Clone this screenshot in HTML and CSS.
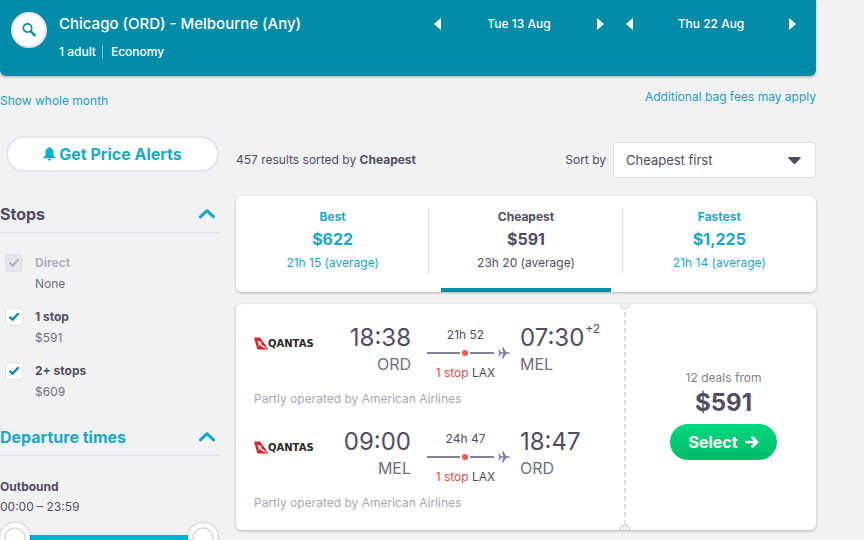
FILE: index.html
```html
<!DOCTYPE html>
<html lang="en">
<head>
<meta charset="utf-8">
<meta name="viewport" content="width=device-width, initial-scale=1">
<title>Chicago to Melbourne flights</title>
<link rel="stylesheet" href="styles.css">
</head>
<body>
<svg class="defs" aria-hidden="true">
  <symbol id="plane" viewBox="0 0 12 12"><path d="M0.300 2.500h1l1.600 2.700h2.500L3.800 0.400h1.400l3.200 4.800h2.300c.7 0 1.100.4 1.100.8s-.4.8-1.100.8H8.400L5.200 11.600H3.800l1.600-4.800H2.900L1.300 9.500h-1L1.200 6z" fill="#827f91"/></symbol>
  <symbol id="tail" viewBox="0 0 15 13"><path d="M0 .5h4.600c1.200 0 2 .4 2.600 1.500L14.500 12.500H3.500z" fill="#dc2030"/><path d="M3.500 4C4.300 4.400 4.800 4.200 5.500 4.400c.8.200 1.300.1 1.800.4.500.3.300.7 1 1-.7 0-1.100.1-1.500.4 1 1.900 4.800 4 7.300 6C10.500 11 6.800 9.500 5.400 7.500c-.3 1-.1 1.600.2 2.500C4.500 9 4.300 7.700 4.500 6.300 3.900 5.800 3.600 5 3.500 4z" fill="#fff"/></symbol>
  <symbol id="chevron" viewBox="0 0 16 10"><path d="M2 8l6-5.500L14 8" fill="none" stroke="#13aac8" stroke-width="2.800" stroke-linecap="round" stroke-linejoin="round"/></symbol>
</svg>

<div class="page">
  <header class="search">
    <button class="search-button" aria-label="Edit search"><svg width="16" height="16" viewBox="0 0 16 16"><g fill="none" stroke="#058ba5" stroke-linecap="round"><circle cx="6.500" cy="6" r="4.200" stroke-width="1.700"/><path d="M9.800 9.300l4 4" stroke-width="2.400"/></g></svg></button>
    <div class="trip">
      <h1>Chicago (ORD) - Melbourne (Any)</h1>
      <p class="details"><span>1 adult</span><span>Economy</span></p>
    </div>
    <div class="dates">
      <div class="date">
        <button aria-label="Previous outbound day"><svg width="7" height="12"><path d="M7 0v12L0 6z"/></svg></button>
        <span>Tue 13 Aug</span>
        <button aria-label="Next outbound day"><svg width="7" height="12"><path d="M0 0v12l7-6z"/></svg></button>
      </div>
      <div class="date">
        <button aria-label="Previous return day"><svg width="7" height="12"><path d="M7 0v12L0 6z"/></svg></button>
        <span>Thu 22 Aug</span>
        <button aria-label="Next return day"><svg width="7" height="12"><path d="M0 0v12l7-6z"/></svg></button>
      </div>
    </div>
  </header>

  <nav class="links"><a class="month" href="#">Show whole month</a><a href="#">Additional bag fees may apply</a></nav>

  <div class="columns">
    <aside>
      <button class="alerts"><svg width="13" height="14" viewBox="0 0 13 14"><path d="M6.500 0c.7 0 1.100.5 1.100 1.100C9.500 1.600 10.500 3 10.500 5v2.500c0 1.300.7 2 2.100 3v.7H.4v-.7c1.400-1 2.100-1.700 2.100-3V5c0-2 1-3.400 2.900-3.900C5.400.5 5.800 0 6.500 0zM4.700 12h3.600c-.2 1-.9 1.600-1.800 1.600S4.900 13 4.700 12z" fill="#00b0d0"/></svg>Get Price Alerts</button>
      <section>
        <h2><button class="toggle">Stops<svg width="18" height="11"><use href="#chevron"/></svg></button></h2>
        <div class="options">
          <label class="option off"><input type="checkbox" checked disabled><span><b>Direct</b><small>None</small></span></label>
          <label class="option"><input type="checkbox" checked><span><b>1 stop</b><small>$591</small></span></label>
          <label class="option"><input type="checkbox" checked><span><b>2+ stops</b><small>$609</small></span></label>
        </div>
      </section>
      <section>
        <h2><button class="toggle active">Departure times<svg width="18" height="11"><use href="#chevron"/></svg></button></h2>
        <div class="times">
          <b>Outbound</b>
          <span>00:00 – 23:59</span>
          <div class="slider">
            <input type="range" min="0" max="1439" value="0" aria-label="Earliest outbound departure">
            <input type="range" min="0" max="1439" value="1439" aria-label="Latest outbound departure">
          </div>
        </div>
      </section>
    </aside>

    <main>
      <div class="summary">
        <p>457 results sorted by <b>Cheapest</b></p>
        <label for="sort">Sort by</label>
        <div class="select-wrap">
          <select id="sort"><option>Cheapest first</option></select>
          <svg width="13" height="7"><path d="M1 0h11q1 .5.500 1.200L7.500 6.500q-1 .8-2 0L.5 1.200Q0 .5 1 0z" fill="#524c61"/></svg>
        </div>
      </div>

      <div class="tabs">
        <button class="tab"><b>Best</b><strong>$622</strong><span>21h 15 (average)</span></button>
        <button class="tab current"><b>Cheapest</b><strong>$591</strong><span>23h 20 (average)</span></button>
        <button class="tab"><b>Fastest</b><strong>$1,225</strong><span>21h 14 (average)</span></button>
      </div>

      <article class="ticket">
        <div class="legs">
          <section class="leg">
            <div class="logo"><svg width="15" height="13" aria-hidden="true"><use href="#tail"/></svg><span>QANTAS</span></div>
            <div class="stop depart"><time>18:38</time><span>ORD</span></div>
            <div class="route"><span>21h 52</span><div class="line"><i></i><em></em><i></i><svg width="12" height="12"><use href="#plane"/></svg></div><p><b>1 stop</b> LAX</p></div>
            <div class="stop"><time>07:30<sup>+2</sup></time><span>MEL</span></div>
            <p class="operator">Partly operated by American Airlines</p>
          </section>
          <section class="leg">
            <div class="logo"><svg width="15" height="13" aria-hidden="true"><use href="#tail"/></svg><span>QANTAS</span></div>
            <div class="stop depart"><time>09:00</time><span>MEL</span></div>
            <div class="route"><span>24h 47</span><div class="line"><i></i><em></em><i></i><svg width="12" height="12"><use href="#plane"/></svg></div><p><b>1 stop</b> LAX</p></div>
            <div class="stop"><time>18:47</time><span>ORD</span></div>
            <p class="operator">Partly operated by American Airlines</p>
          </section>
        </div>
        <div class="deal">
          <span>12 deals from</span>
          <strong>$591</strong>
          <button>Select<svg width="14" height="12" viewBox="0 0 14 12"><path d="M1.500 6h10M7.500 1.500L12 6l-4.500 4.500" fill="none" stroke="#fff" stroke-width="2.600" stroke-linecap="round" stroke-linejoin="round"/></svg></button>
        </div>
      </article>
    </main>
  </div>
</div>
</body>
</html>
```
FILE: styles.css
```css
* { box-sizing: border-box; }
html { scrollbar-width: none; }
body {
  margin: 0;
  background: #f2f2f5;
  color: #524c61;
  font: 13px/20px Inter, "Liberation Sans", sans-serif;
}
button, select, input { font: inherit; color: inherit; margin: 0; }
button { border: 0; padding: 0; background: none; cursor: pointer; }
h1, h2, p { margin: 0; }
a { color: #219fbe; text-decoration: none; }
b { font-weight: 700; }
svg { display: block; flex: none; }
.defs { position: absolute; width: 0; height: 0; }
.page { margin-right: 48px; }

.search {
  display: flex;
  min-height: 76px;
  padding: 12px 16px 0 11px;
  background: #008ca6;
  color: #fff;
  border-radius: 0 0 6px 6px;
  box-shadow: 0 1px 3px rgba(0, 0, 0, .3);
}
.search-button {
  display: grid;
  place-items: center;
  width: 36px;
  height: 36px;
  border: 2px solid #e6e4ee;
  border-radius: 50%;
  background: #fff;
}
.trip { flex: 1; margin-left: 12px; }
h1 { font-size: 15px; line-height: 24px; font-weight: 500; }
.details { display: flex; align-items: center; margin-top: 6px; height: 20px; font-weight: 500; font-size: 12px; }
.details span { line-height: 14px; }
.details span + span { margin-left: 6px; padding-left: 8px; border-left: 1px solid #7fc5d2; }
.dates { display: flex; gap: 14px; height: 24px; }
.date { display: flex; align-items: center; justify-content: space-between; width: 178px; font-size: 12px; font-weight: 500; padding: 0 4px; }
.date button { display: flex; align-items: center; height: 24px; }
.date path { fill: #fff; }

.links { display: flex; justify-content: space-between; padding-top: 11px; font-size: 12px; }
.month { margin-top: 4px; }

.columns { display: grid; grid-template-columns: 220px minmax(0, 1fr); gap: 16px; margin-top: 25px; }
.alerts {
  display: flex;
  align-items: center;
  justify-content: center;
  gap: 3px;
  width: 213px;
  height: 36px;
  margin-left: 6px;
  border: 2px solid #e6e4eb;
  border-radius: 18px;
  background: #fff;
  color: #1aa8c5;
  font-size: 16px;
  font-weight: 700;
}
h2 { font-size: 16px; font-weight: 700; }
.toggle {
  display: flex;
  align-items: center;
  justify-content: space-between;
  width: 100%;
  height: 36px;
  padding: 0 4px 2px 0;
  border-bottom: 1px solid #e2e0e7;
}
.toggle.active { color: #1aa8c5; }
section:nth-of-type(1) > h2 { margin-top: 25px; }
.options { padding: 19px 0 6px 5px; }
.option { display: flex; align-items: flex-start; gap: 12px; height: 54px; }
.option input {
  appearance: none;
  flex: none;
  width: 18px;
  height: 18px;
  margin-top: 2px;
  border: 1px solid #e2e0e8;
  border-radius: 3px;
  background: #fff;
  display: grid;
  place-items: center;
}
.option input:checked::before {
  content: "";
  width: 11px;
  height: 9px;
  background: #0787a0;
  clip-path: polygon(0 56%, 15% 40%, 36% 62%, 84% 0, 100% 15%, 39% 96%);
}
.option b, .option small { display: block; font-size: 12px; line-height: 21px; }
.option small { color: #716e7f; }
.off input { background: #e6e4eb; }
.off input:checked::before { background: #b2aebd; }
.off b { color: #b2aebd; }
.times { padding-top: 21px; font-size: 12px; }
.times b, .times > span { display: block; line-height: 20px; }
.slider {
  display: grid;
  margin: 6px 2px 0 0;
  background: linear-gradient(#00b3d2, #00b3d2) center / 100% 6px no-repeat;
}
.slider input {
  grid-area: 1 / 1;
  appearance: none;
  width: 100%;
  height: 30px;
  background: none;
  pointer-events: none;
}
.slider input::-webkit-slider-thumb {
  appearance: none;
  width: 30px;
  height: 30px;
  border-radius: 50%;
  background: radial-gradient(circle, #fff 9px, #c6c4ca 10px, #fff 11px);
  box-shadow: 0 0 3px rgba(0, 0, 0, .3);
  pointer-events: auto;
}

.summary { display: flex; align-items: center; height: 36px; margin-top: 6px; font-size: 12px; }
.summary p { flex: 1; }
.summary label { margin-right: 7px; }
.select-wrap { display: grid; align-items: center; width: 203px; }
.select-wrap > * { grid-area: 1 / 1; }
.select-wrap svg { justify-self: end; margin-right: 15px; pointer-events: none; }
select {
  appearance: none;
  width: 100%;
  height: 36px;
  padding: 0 12px;
  border: 1px solid #e0dfe5;
  border-radius: 3px;
  background: #fff;
  font-size: 13px;
}

.tabs, .ticket { border-radius: 6px; background: #fff; box-shadow: 0 1px 3px rgba(0, 0, 0, .27); }
.tabs { display: grid; grid-template-columns: repeat(3, 1fr); height: 96px; margin-top: 18px; }
.tab {
  position: relative;
  display: flex;
  flex-direction: column;
  align-items: center;
  padding-top: 11px;
  color: #1aa8c5;
  font-size: 12px;
}
.tab + .tab::before { content: ""; position: absolute; left: -1px; top: 12px; bottom: 18px; border-left: 1px solid #e0dfe4; }
.tab b { line-height: 20px; }
.tab strong { font-size: 16px; line-height: 24px; }
.tab span { line-height: 24px; }
.current { color: #524c61; }
.current::after { content: ""; position: absolute; left: 12px; right: 12px; bottom: 0; height: 4px; background: #008ca6; }

.ticket { display: grid; grid-template-columns: minmax(0, 389px) minmax(190px, 1fr); height: 226px; margin-top: 12px; overflow: hidden; }
.legs { padding: 18px 18px 0; }
.leg {
  display: grid;
  grid-template-columns: 62px 95px 93px 1fr;
  grid-template-rows: 61px 32px;
  height: 104px;
}
.logo { display: flex; align-items: center; height: 15px; margin-top: 14px; }
.logo span { margin-left: -1px; font: 700 10px/15px "DejaVu Sans", sans-serif; color: #282828; }
.stop { display: flex; flex-direction: column; padding-left: 16px; }
.stop time { font-size: 24px; line-height: 32px; white-space: nowrap; }
.stop span { font-size: 16px; line-height: 20px; color: #716e7f; }
.stop sup { font-size: 12px; line-height: 0; vertical-align: 13px; margin-left: 1px; }
.depart { padding: 0; align-items: flex-end; }
.route { padding: 3px 0 0 16px; text-align: center; font-size: 12px; white-space: nowrap; }
.route > span { display: block; line-height: 20px; }
.line { display: grid; grid-template-columns: 33px 6px 1fr 12px; align-items: center; column-gap: 2px; height: 16px; margin-right: -6px; }
.line i { height: 2px; background: #827f91; }
.line em + i { margin-right: 2px; }
.line em { width: 6px; height: 6px; border-radius: 50%; background: #ff5452; }
.route b { font-weight: 400; color: #e04c4c; }
.route p { line-height: 24px; }
.operator { grid-column: 1 / -1; line-height: 32px; color: #aaa7b5; font-size: 12px; }

.deal { position: relative; display: flex; flex-direction: column; align-items: center; padding: 64px 0 0 6px; }
.deal::before {
  content: "";
  position: absolute;
  inset: 8px auto 6px -1px;
  width: 2px;
  background: repeating-linear-gradient(#dfdee5 0 5px, transparent 5px 8px);
}
.deal::after {
  content: "";
  position: absolute;
  left: -6px;
  width: 12px;
  top: -6px;
  bottom: -6px;
  background:
    radial-gradient(circle at 6px 6px, #f2f2f5 4px, #d8d8de 5px, transparent 6px) top / 12px 12px no-repeat,
    radial-gradient(circle at 6px 6px, #f2f2f5 4px, #c8c8ce 5px, transparent 6px) bottom / 12px 12px no-repeat;
}
.deal span { font-size: 12px; color: #827f91; }
.deal strong { font-size: 24px; line-height: 30px; }
.deal button {
  display: flex;
  align-items: center;
  justify-content: center;
  gap: 7px;
  width: 107px;
  height: 36px;
  margin-top: 6px;
  border-radius: 18px;
  background: linear-gradient(#00d77f, #00bd68);
  color: #fff;
  font-size: 16px;
  font-weight: 700;
}
```
